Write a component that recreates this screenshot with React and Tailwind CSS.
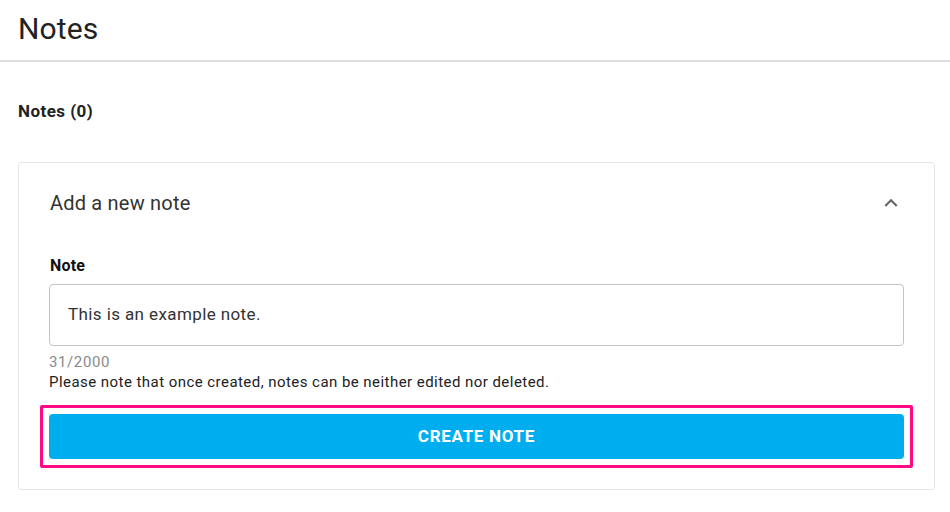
export default function App() {
  return (
    <div className="min-h-[512px] bg-white font-['Roboto','Liberation_Sans',sans-serif] text-[#222]">
      {/* page header */}
      <div className="h-[62px] border-b-2 border-[#dedede] px-[18px] pt-[11px]">
        <h1 className="text-[30px] font-normal leading-[36px] tracking-[0.1px] text-[#222]">Notes</h1>
      </div>

      <div className="pl-[18px] pr-[15px]">
        <h2 className="mt-[37px] text-[17px] font-bold leading-[24px] tracking-[0.45px] text-[#222]">
          Notes (0)
        </h2>

        {/* add note card */}
        <div className="mt-[39px] rounded-[3px] border border-[#e6e6e6] px-[30px] pb-[21px]">
          <div className="flex h-[80px] items-center justify-between">
            <span className="pl-px text-[20px] leading-[28px] tracking-[0.2px] text-[#333]">Add a new note</span>
            <svg width="26" height="26" viewBox="0 0 24 24" className="fill-[#666]">
              <path d="M12 8l-6 6 1.41 1.41L12 10.83l4.59 4.58L18 14z" />
            </svg>
          </div>

          <label className="mt-[12px] mb-[7px] block pl-px text-[16px] font-bold leading-[22px] tracking-[0.2px] text-[#111]">
            Note
          </label>
          <div className="flex h-[62px] items-center rounded-[4px] border border-[#c4c4c4] px-[18px] text-[17px] tracking-[0.4px] text-[#333]">
            This is an example note.
          </div>

          <p className="mt-[6px] text-[15px] leading-[20px] tracking-[0.6px] text-[#8a8a8a]">31/2000</p>
          <p className="text-[15px] leading-[20px] tracking-[0.45px] text-[#222]">
            Please note that once created, notes can be neither edited nor deleted.
          </p>

          {/* highlighted action */}
          <div className="-mx-[9px] mt-[13px] rounded-[2px] border-[3px] border-[#ff0a84] p-[6px]">
            <button className="flex h-[45px] w-full items-center justify-center rounded-[4px] bg-[#00aeef] text-[17px] font-bold tracking-[0.7px] text-white">
              CREATE NOTE
            </button>
          </div>
        </div>
      </div>
    </div>
  );
}
